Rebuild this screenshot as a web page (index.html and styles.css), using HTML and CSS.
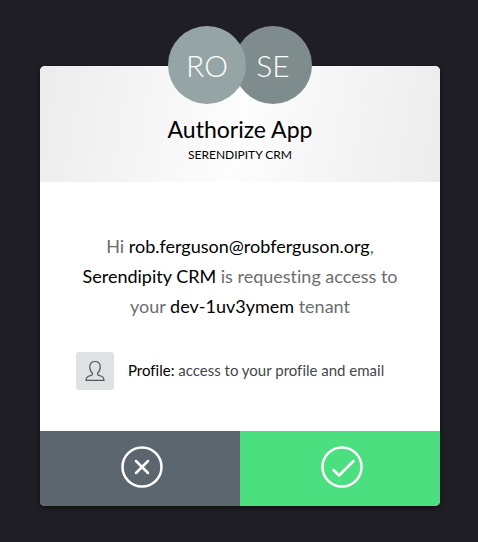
FILE: index.html
```html
<!DOCTYPE html>
<html lang="en">
<head>
<meta charset="utf-8">
<meta name="viewport" content="width=device-width, initial-scale=1">
<title>Authorize App</title>
<link rel="stylesheet" href="styles.css">
</head>
<body>
<main class="card">
  <header class="header">
    <div class="avatars">
      <span class="avatar avatar-user">RO</span>
      <span class="avatar avatar-app">SE</span>
    </div>
    <h1 class="title">Authorize App</h1>
    <h2 class="subtitle">SERENDIPITY CRM</h2>
  </header>
  <section class="content">
    <p class="message">Hi <strong>rob.ferguson@robferguson.org</strong>, <strong>Serendipity CRM</strong> is requesting access to your <strong>dev-1uv3ymem</strong> tenant</p>
    <ul class="scopes">
      <li class="scope">
        <span class="scope-icon">
          <svg width="20" height="22" viewBox="0 0 20 22" aria-hidden="true"><path d="M7.4 13.2C5.6 11.7 4.8 9.4 4.8 6.8C4.8 3.2 6.9 1.5 10 1.5S15.2 3.2 15.2 6.8C15.2 9.4 14.4 11.7 12.6 13.2C12.2 14.5 12.8 15 14 15.4L16.5 16.2C18.3 16.9 18.9 18 19 20.3H1C1.1 18 1.7 16.9 3.5 16.2L6 15.4C7.2 15 7.8 14.5 7.4 13.2Z"/></svg>
        </span>
        <span class="scope-text"><strong>Profile:</strong> access to your profile and email</span>
      </li>
    </ul>
  </section>
  <form class="actions">
    <button class="action deny" type="button" aria-label="Decline">
      <svg width="42" height="42" viewBox="0 0 42 42" aria-hidden="true"><circle cx="21" cy="21" r="19.5"/><path d="M15 15L27 27M27 15L15 27"/></svg>
    </button>
    <button class="action allow" type="button" aria-label="Accept">
      <svg width="42" height="42" viewBox="0 0 42 42" aria-hidden="true"><circle cx="21" cy="21" r="19.5"/><path d="M12.5 24L18 29.5L32.5 15"/></svg>
    </button>
  </form>
</main>
</body>
</html>
```
FILE: styles.css
```css
* {
  box-sizing: border-box;
}

body {
  margin: 0;
  min-height: 100vh;
  padding: 66px 38px 36px 40px;
  background: #1f1e24;
  color: #6d6d70;
  font-family: Avenir, Lato, sans-serif;
  font-variant-ligatures: none;
}

.card {
  max-width: 400px;
  margin: 0 auto;
  border-radius: 5px;
  background: #fff;
  box-shadow: 0 2px 4px rgba(0, 0, 0, 0.6);
}

.header {
  display: flex;
  flex-direction: column;
  align-items: center;
  padding-bottom: 19px;
  border-radius: 5px 5px 0 0;
  background: linear-gradient(100deg, #ececec, #fdfdfd 50%, #ececec);
  color: #000;
}

.avatars {
  display: flex;
  margin-top: -40px;
}

.avatar {
  display: flex;
  align-items: center;
  justify-content: center;
  width: 78px;
  height: 78px;
  border-radius: 50%;
  color: #fff;
  font-size: 30px;
  font-weight: 300;
  line-height: 36px;
}

.avatar-user {
  z-index: 1;
  background: #95a5a6;
}

.avatar-app {
  margin-left: -12px;
  background: #7f8c8d;
}

.title {
  margin: 11px 0 0;
  font-size: 23px;
  font-weight: 400;
  line-height: 28px;
}

.subtitle {
  margin: 4px 0 0;
  font-size: 12px;
  font-weight: 400;
  line-height: 16px;
}

.content {
  padding: 49px 36px 41px;
}

.message {
  margin: 0;
  font-size: 18px;
  line-height: 30px;
  text-align: center;
}

.content strong {
  color: #000;
  font-weight: 400;
}

.scopes {
  margin: 31px 0 0;
  padding: 0;
  list-style: none;
}

.scope {
  display: flex;
  align-items: center;
  gap: 14px;
  color: #464649;
  font-size: 15px;
}

.scope-text {
  padding-bottom: 2px;
}

.scope-icon {
  display: grid;
  place-items: center;
  width: 38px;
  height: 38px;
  border-radius: 3px;
  background: #e0e1e3;
}

.scope-icon svg {
  fill: none;
  stroke: #55585c;
  stroke-width: 1.2;
  stroke-linejoin: round;
}

.actions {
  display: flex;
}

.action {
  display: grid;
  flex: 1;
  place-items: center;
  height: 75px;
  padding: 0 0 4px 3px;
  border: 0;
  cursor: pointer;
}

.action svg {
  fill: none;
  stroke: #fff;
  stroke-width: 2.5;
  stroke-linecap: round;
  stroke-linejoin: round;
}

.deny {
  border-radius: 0 0 0 5px;
  background: #5c666f;
}

.allow {
  border-radius: 0 0 5px 0;
  background: #4bdf80;
}
```
